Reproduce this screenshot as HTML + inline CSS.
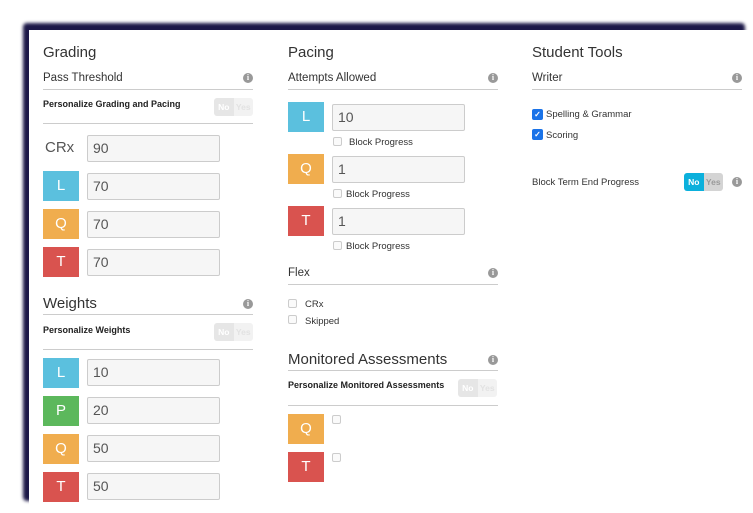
<!DOCTYPE html>
<html><head><meta charset="utf-8"><style>
*{box-sizing:border-box;margin:0;padding:0}
body{width:753px;height:513px;overflow:hidden;background:#fff;font-family:"Liberation Sans",Arial,sans-serif;color:#333;position:relative}
.sh{position:absolute;left:23px;top:23px;width:722px;height:478px;background:#1c1848;filter:blur(1.5px);border-radius:4px}
.pn{position:absolute;left:29px;top:30px;right:0;bottom:0;background:#fff}
.a{position:absolute;white-space:nowrap}
.h{font-size:15px;color:#333}
.s{font-size:11.5px;color:#333}
.b{font-size:9px;font-weight:bold;color:#222}
.t{font-size:9.5px;color:#333}
.ln{position:absolute;height:1px;background:#ccc}
.i{position:absolute;width:10px;height:10px;border-radius:50%;background:#999;color:#fff;font-size:8px;font-weight:bold;text-align:center;line-height:10px;font-family:"Liberation Serif",serif}
.bd{position:absolute;width:36px;height:30px;color:#fff;font-size:15px;text-align:center;line-height:30px}
.L{background:#5bc0de}.Q{background:#f0ad4e}.T{background:#d9534f}.P{background:#5cb85c}
.in{position:absolute;width:133px;height:27px;background:#f6f6f6;border:1px solid #ccc;border-radius:2px;font-size:14px;color:#555;padding-left:5px;line-height:25px}
.cb{position:absolute;width:9px;height:9px;border:1px solid #ccc;border-radius:2px;background:#fafafa}
.ck{position:absolute;width:11px;height:11px;border-radius:2px;background:#1a73e8;color:#fff;font-size:8px;line-height:11px;text-align:center;font-weight:bold}
.tg{position:absolute;width:39px;height:18px;border-radius:3px;overflow:hidden;font-size:8.5px;font-weight:bold;display:flex}
.tg span{flex:1;text-align:center;line-height:18px}
.off span:first-child{background:#e6e6e6;color:#fff}.off span:last-child{background:#f2f2f2;color:#e2e2e2}
.on span:first-child{background:#0bb0dc;color:#fff}.on span:last-child{background:#d4d4d4;color:#999}
</style></head><body>
<div class="sh"></div><div class="pn"></div>

<!-- col 1 -->
<div class="a h" style="left:43px;top:44px">Grading</div>
<div class="a s" style="left:43px;top:72px">Pass Threshold</div><div class="i" style="left:243px;top:73px">i</div>
<div class="ln" style="left:43px;top:89px;width:210px"></div>
<div class="a b" style="left:43px;top:99px">Personalize Grading and Pacing</div>
<div class="tg off" style="left:214px;top:98px"><span>No</span><span>Yes</span></div>
<div class="ln" style="left:43px;top:123px;width:210px"></div>
<div class="a" style="left:45px;top:139px;font-size:15px;color:#555">CRx</div><div class="in" style="left:87px;top:135px">90</div>
<div class="bd L" style="left:43px;top:171px">L</div><div class="in" style="left:87px;top:173px">70</div>
<div class="bd Q" style="left:43px;top:209px">Q</div><div class="in" style="left:87px;top:211px">70</div>
<div class="bd T" style="left:43px;top:247px">T</div><div class="in" style="left:87px;top:249px">70</div>
<div class="a h" style="left:43px;top:295px">Weights</div><div class="i" style="left:243px;top:299px">i</div>
<div class="ln" style="left:43px;top:314px;width:210px"></div>
<div class="a b" style="left:43px;top:325px">Personalize Weights</div>
<div class="tg off" style="left:214px;top:323px"><span>No</span><span>Yes</span></div>
<div class="ln" style="left:43px;top:349px;width:210px"></div>
<div class="bd L" style="left:43px;top:358px">L</div><div class="in" style="left:87px;top:359px">10</div>
<div class="bd P" style="left:43px;top:396px">P</div><div class="in" style="left:87px;top:397px">20</div>
<div class="bd Q" style="left:43px;top:434px">Q</div><div class="in" style="left:87px;top:435px">50</div>
<div class="bd T" style="left:43px;top:472px">T</div><div class="in" style="left:87px;top:473px">50</div>

<!-- col 2 -->
<div class="a h" style="left:288px;top:44px">Pacing</div>
<div class="a s" style="left:288px;top:72px">Attempts Allowed</div><div class="i" style="left:488px;top:73px">i</div>
<div class="ln" style="left:288px;top:89px;width:210px"></div>
<div class="bd L" style="left:288px;top:102px">L</div><div class="in" style="left:332px;top:104px">10</div>
<div class="cb" style="left:333px;top:137px"></div><div class="a t" style="left:349px;top:137px">Block Progress</div>
<div class="bd Q" style="left:288px;top:154px">Q</div><div class="in" style="left:332px;top:156px">1</div>
<div class="cb" style="left:333px;top:189px"></div><div class="a t" style="left:346px;top:189px">Block Progress</div>
<div class="bd T" style="left:288px;top:206px">T</div><div class="in" style="left:332px;top:208px">1</div>
<div class="cb" style="left:333px;top:241px"></div><div class="a t" style="left:346px;top:241px">Block Progress</div>
<div class="a s" style="left:288px;top:267px">Flex</div><div class="i" style="left:488px;top:268px">i</div>
<div class="ln" style="left:288px;top:284px;width:210px"></div>
<div class="cb" style="left:288px;top:299px"></div><div class="a t" style="left:305px;top:299px">CRx</div>
<div class="cb" style="left:288px;top:315px"></div><div class="a t" style="left:305px;top:316px">Skipped</div>
<div class="a h" style="left:288px;top:351px">Monitored Assessments</div><div class="i" style="left:488px;top:355px">i</div>
<div class="ln" style="left:288px;top:370px;width:210px"></div>
<div class="a b" style="left:288px;top:380px">Personalize Monitored Assessments</div>
<div class="tg off" style="left:458px;top:379px"><span>No</span><span>Yes</span></div>
<div class="ln" style="left:288px;top:405px;width:210px"></div>
<div class="bd Q" style="left:288px;top:414px">Q</div><div class="cb" style="left:332px;top:415px"></div>
<div class="bd T" style="left:288px;top:452px">T</div><div class="cb" style="left:332px;top:453px"></div>

<!-- col 3 -->
<div class="a h" style="left:532px;top:44px">Student Tools</div>
<div class="a s" style="left:532px;top:72px">Writer</div><div class="i" style="left:732px;top:73px">i</div>
<div class="ln" style="left:532px;top:89px;width:210px"></div>
<div class="ck" style="left:532px;top:109px">✓</div><div class="a t" style="left:546px;top:109px">Spelling &amp; Grammar</div>
<div class="ck" style="left:532px;top:129px">✓</div><div class="a t" style="left:546px;top:130px">Scoring</div>
<div class="a t" style="left:532px;top:177px">Block Term End Progress</div>
<div class="tg on" style="left:684px;top:173px"><span>No</span><span>Yes</span></div>
<div class="i" style="left:732px;top:177px">i</div>
</body></html>
